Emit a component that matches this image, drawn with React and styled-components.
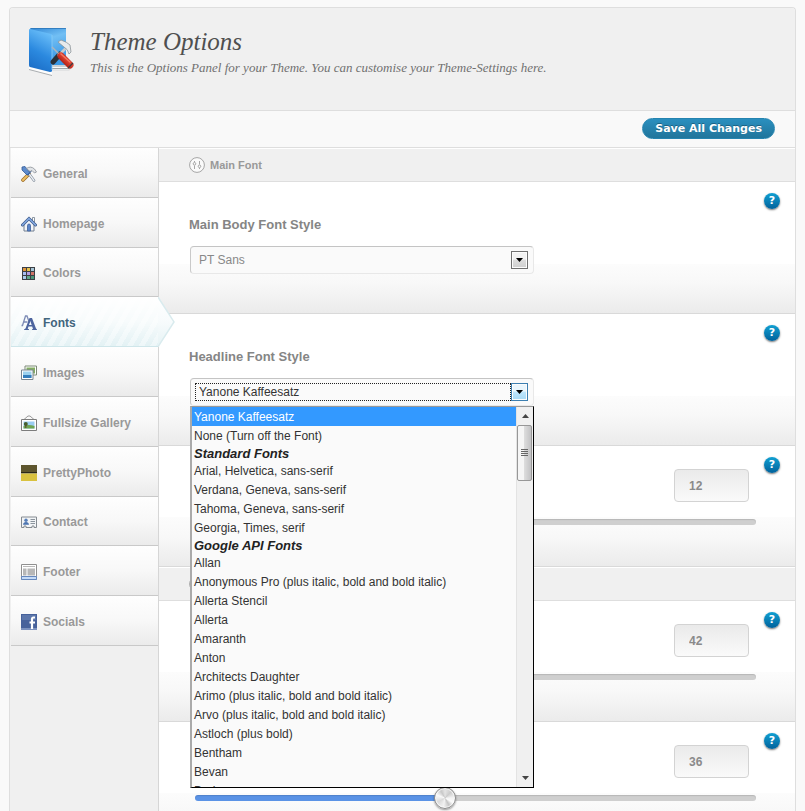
import React, { useState } from "react";
import styled, { createGlobalStyle, css } from "styled-components";

const GlobalStyle = createGlobalStyle`
  *, *::before, *::after { box-sizing: border-box; }
  html { height: 100%; overflow: hidden; }
  body {
    margin: 0;
    background: #f9f9f9;
    color: #8a8a8a;
    font: 12px/16px "Liberation Sans", Arial, sans-serif;
  }
  button, input, select { font: inherit; color: inherit; margin: 0; }
`;

const Page = styled.div`
  height: 100vh;
  overflow: hidden;
  padding: 7px 9px 0;
`;

const Panel = styled.div`
  min-height: 100%;
  display: flex;
  flex-direction: column;
  border: 1px solid #dedede;
  border-bottom: 0;
  border-radius: 4px 4px 0 0;
`;

const Header = styled.header`
  display: flex;
  gap: 14px;
  padding: 18px 18px 32px;
  background: #f0f0f0;
  border-bottom: 1px solid #dedede;
  border-radius: 4px 4px 0 0;
`;

const Title = styled.h1`
  margin: 0;
  color: #4f4f4f;
  font: italic 25px/32px "Liberation Serif", Georgia, serif;
`;

const Subtitle = styled.p`
  margin: 0;
  color: #707070;
  font: italic 13px/20px "Liberation Serif", Georgia, serif;
`;

const Toolbar = styled.div`
  display: flex;
  justify-content: flex-end;
  padding: 7px 20px 8px;
  background: #f9f9f9;
  border-bottom: 1px solid #dedede;
`;

const SaveButton = styled.button`
  height: 21px;
  padding: 0 12px;
  border: 1px solid #2484b0;
  border-radius: 11px;
  background: linear-gradient(#2a8fbf, #21759b);
  color: #fff;
  font: bold 11px/19px "DejaVu Sans", Verdana, sans-serif;
  text-shadow: 0 -1px 0 rgba(0, 0, 0, 0.3);
`;

const Columns = styled.div`
  flex: 1;
  display: grid;
  grid-template-columns: 149px 1fr;
`;

const Sidebar = styled.nav`
  background: #f0f0f0;
  border-right: 1px solid #d6d6d6;
  padding-left: 1px;
`;

const NavList = styled.ul`
  display: grid;
  grid-auto-rows: 1fr;
  min-height: 498px;
  margin: 0;
  padding: 0;
  list-style: none;
`;

const NavItem = styled.li`
  position: relative;
  display: flex;
`;

const NavLink = styled.a`
  flex: 1;
  display: flex;
  align-items: center;
  gap: 6px;
  padding: 3px 0 0 10px;
  border-bottom: 1px solid #c9c9c9;
  background: linear-gradient(#fefefe, #f8f8f8 50%, #ebebeb);
  color: #999;
  font-weight: bold;
  text-decoration: none;
  ${(p) =>
    p.$active &&
    css`
      color: #42657d;
      border-bottom-color: #cfe6ea;
      background:
        linear-gradient(#fff, rgba(255, 255, 255, 0.75) 50%, rgba(255, 255, 255, 0.1)),
        repeating-linear-gradient(120deg, #e0f0f3 0 5px, #ecf6f8 5px 10px);
    `}
`;

const ArrowTip = styled.svg`
  position: absolute;
  z-index: 2;
  top: 0;
  left: 100%;
  width: 17px;
  height: 100%;
`;

const Main = styled.main`
  min-width: 0;
  background: #fff;
`;

const SectionHead = styled.h2`
  display: flex;
  align-items: center;
  gap: 5px;
  height: 34px;
  margin: 0;
  padding: 0 30px;
  border-top: 1px solid #fff;
  border-bottom: 1px solid #dedede;
  background: #f0f0f0;
  color: #999;
  font-size: 11px;
  line-height: 16px;
`;

const Section = styled.section`
  display: grid;
  grid-template-columns: 1fr 16px;
  gap: 8px;
  min-height: ${(p) => (p.$tall ? "132px" : "121px")};
  padding: 11px 15px 0 30px;
  border-bottom: 1px solid #d9d9d9;
  background: linear-gradient(#fcfcfc, #f8f8f8 40%, #ebebeb) bottom / 100% 49px no-repeat #fff;
`;

const Field = styled.div`
  padding-top: 24px;
`;

const FieldLabel = styled.label`
  display: block;
  color: #858585;
  font-size: 13px;
  font-weight: bold;
  line-height: 16px;
`;

const HelpButton = styled.button`
  width: 16px;
  height: 16px;
  padding: 0;
  border: 0;
  border-radius: 50%;
  background: linear-gradient(#11a0d2, #00619b);
  box-shadow: 0 1px 2px rgba(0, 0, 0, 0.55);
  color: #fff;
  font: bold 11px/16px "DejaVu Sans", Verdana, sans-serif;
`;

const SelectBox = styled.div`
  position: relative;
  display: flex;
  align-items: center;
  max-width: 344px;
  height: 28px;
  margin: 13px 0 0 1px;
  padding: 0 5px 0 4px;
  border: 1px solid #e8e8e8;
  border-top-color: #c4c4c4;
  border-left-color: #c9c9c9;
  border-radius: 4px;
  background: #fafafa;
`;

const Select = styled.select`
  appearance: none;
  flex: 1;
  min-width: 0;
  height: 18px;
  padding: 0 3px;
  border: 1px dotted ${(p) => (p.$open ? "#222" : "transparent")};
  border-radius: 0;
  background: transparent;
  color: ${(p) => (p.$open ? "#333" : "#888")};
  line-height: 16px;
  outline: 0;
`;

const SelectArrow = styled.span`
  display: flex;
  align-items: center;
  justify-content: center;
  width: 17px;
  height: 18px;
  border: 1px solid ${(p) => (p.$open ? "#3c7fb1" : "#707070")};
  background: ${(p) =>
    p.$open
      ? "linear-gradient(#eaf6fd 45%, #bee6fd 50%, #a7d9f5)"
      : "linear-gradient(#f2f2f2 45%, #dddddd 50%, #cfcfcf)"};
  box-shadow: inset 0 0 0 1px #fcfcfc;
  pointer-events: none;
`;

const Menu = styled.div`
  position: absolute;
  z-index: 5;
  top: 27px;
  left: -1px;
  right: -1px;
  display: grid;
  grid-template-columns: 1fr 17px;
  height: 382px;
  border: 1px solid #000;
  border-top-color: #999;
  border-left: 2px solid #aaa;
  background: #fafafa;
`;

const Options = styled.ul`
  margin: 0;
  padding: 0;
  overflow: hidden;
  list-style: none;
`;

const Option = styled.li`
  height: 19px;
  padding-left: 2px;
  background: ${(p) => (p.$selected ? "#3399ff" : "transparent")};
  color: ${(p) => (p.$selected ? "#fff" : "#333")};
  line-height: 20px;
  white-space: nowrap;
`;

const OptionGroup = styled.li`
  height: 16px;
  padding-left: 2px;
  color: #222;
  font-size: 13px;
  font-weight: bold;
  font-style: italic;
  line-height: 17px;
`;

const ScrollBar = styled.div`
  display: flex;
  flex-direction: column;
  align-items: stretch;
  border-left: 1px solid #e3e3e3;
  background: #f0f0f0;
`;

const ScrollArrow = styled.span`
  display: flex;
  align-items: center;
  justify-content: center;
  height: 18px;
`;

const ScrollThumb = styled.span`
  display: flex;
  align-items: center;
  justify-content: center;
  height: 56px;
  margin-right: 1px;
  margin-bottom: auto;
  border: 1px solid #979797;
  border-radius: 2px;
  background: linear-gradient(90deg, #f5f5f5 45%, #dcdcdc 50%, #c2c2c4);
`;

const SizeField = styled.div`
  display: flex;
  flex-direction: column;
  padding: 12px 0 0 6px;
`;

const SizeInput = styled.input`
  align-self: flex-end;
  width: 75px;
  height: 33px;
  margin-right: 7px;
  padding: 0 14px;
  border: 1px solid #d3d3d3;
  border-radius: 4px;
  background: linear-gradient(#eaeaea, #fafafa);
  color: #8a8a8a;
  font-weight: bold;
`;

const Slider = styled.input`
  appearance: none;
  width: 100%;
  height: 22px;
  margin-top: 9px;
  background: transparent;

  &::-webkit-slider-runnable-track {
    height: 6px;
    border-radius: 3px;
    box-shadow: inset 0 1px 1px rgba(0, 0, 0, 0.12);
    background: linear-gradient(90deg, #5b93e6 var(--fill), #cfcfcf var(--fill));
  }

  &::-webkit-slider-thumb {
    appearance: none;
    width: 22px;
    height: 22px;
    margin-top: -8px;
    border: 1px solid #8c8c8c;
    border-radius: 50%;
    background: conic-gradient(#e4e4e4, #cccccc 45deg, #f4f4f4 90deg, #fafafa 120deg, #c4c4c4 150deg, #f2f2f2 190deg, #dadada 240deg, #fafafa 290deg, #c8c8c8 330deg, #e4e4e4);
    box-shadow: 0 1px 2px rgba(0, 0, 0, 0.4), inset 0 0 0 1px rgba(255, 255, 255, 0.7);
  }
`;

const LogoIcon = () => (
  <svg width="48" height="50" viewBox="0 0 48 50" aria-hidden="true">
    <defs>
      <linearGradient id="lgBack" x1="0" y1="0" x2="0.3" y2="1">
        <stop offset="0" stopColor="#2f86d6" />
        <stop offset="0.4" stopColor="#72bff4" />
        <stop offset="1" stopColor="#3a97e4" />
      </linearGradient>
      <linearGradient id="lgFront" x1="0.6" y1="0" x2="0.3" y2="1">
        <stop offset="0" stopColor="#6cc0fa" />
        <stop offset="0.55" stopColor="#2b89df" />
        <stop offset="1" stopColor="#1b6dc6" />
      </linearGradient>
      <linearGradient id="lgRed" x1="0" y1="1" x2="1" y2="0">
        <stop offset="0" stopColor="#8f0f0a" />
        <stop offset="0.6" stopColor="#e2402f" />
        <stop offset="1" stopColor="#b51d14" />
      </linearGradient>
    </defs>
    <path d="M6 38h33l3 5q0 1-1 1H20z" fill="#fafafa" stroke="#c5c8ca" strokeWidth="0.6" />
    <path d="M24 40h15M24 42.500h17" stroke="#9fa5a9" strokeWidth="1" />
    <path d="M2 3q0-1 1-1h34q1 0 1 1v36H8z" fill="url(#lgBack)" />
    <path d="M3 2.500h35" stroke="#2c76b8" strokeWidth="0.8" />
    <path d="M1 42l23 6v2L1 44z" fill="#a9adb0" />
    <path d="M1 39l23 6v4L1 43z" fill="#fdfdfd" />
    <path d="M1 4q0-1 1-1l21 5q1 0 1 1v36q0 1-2 1L2 41q-1 0-1-2z" fill="url(#lgFront)" />
    <path d="M24 9v35" stroke="#8bcdf8" strokeWidth="0.8" />
    <path d="M32 28L25 36" stroke="#2b3138" strokeWidth="5" strokeLinecap="round" />
    <path d="M39 21l-9 9" stroke="#c6cbd0" strokeWidth="2.600" />
    <path d="M30 16l3-2q6 2 9 5l1 7-2 2q-1-5-5-7z" fill="#e7eaec" stroke="#8d9499" strokeWidth="0.8" />
    <path d="M24 21l9 9" stroke="#aeb4ba" strokeWidth="1.400" />
    <path d="M33 30l9 9" stroke="url(#lgRed)" strokeWidth="7" strokeLinecap="round" />
    <path d="M33 28l9 8" stroke="#f07a63" strokeWidth="1.400" strokeLinecap="round" />
    <path d="M40 42l5-5" stroke="#3a3e42" strokeWidth="1.200" />
  </svg>
);

const iconArt = {
  general: (
    <>
      <path d="M2 14L8 8" stroke="#9b6a25" strokeWidth="3.6" strokeLinecap="round" />
      <path d="M2 14L8 8" stroke="#ebbe62" strokeWidth="2.2" strokeLinecap="round" />
      <path d="M13 14.500L6 5" stroke="#7d8896" strokeWidth="2.600" strokeLinecap="round" />
      <path d="M13 14.500L6 5" stroke="#edf1f5" strokeWidth="1.300" strokeLinecap="round" />
      <path d="M10 4L6 9" stroke="#345a98" strokeWidth="2.600" />
      <path d="M1 1l3-.5 5 6-3 2.500L1 4z" fill="#5d8bcb" stroke="#345a98" strokeWidth=".8" />
      <path d="M5.500 2.500q4-3 8 .5l2 3-2 1-2.500-2.500-2 1z" fill="#e2e5e8" stroke="#8b9197" strokeWidth=".8" />
    </>
  ),
  homepage: (
    <>
      <path d="M11.500 1.500h2V6h-2z" fill="#fff" stroke="#6f7c8c" strokeWidth=".8" />
      <path d="M3 8l5-5 5 5v7H3z" fill="#f3f5f9" stroke="#707e90" strokeWidth="1" />
      <path d="M6.500 15V9.500Q6.500 8 8 8t1.500 1.500V15z" fill="#5c85c9" stroke="#3c5f9c" strokeWidth=".8" />
      <path d="M1.500 9L8 2.500 14.500 9" fill="none" stroke="#405d8d" strokeWidth="3" strokeLinecap="round" />
      <path d="M1.500 9L8 2.500 14.500 9" fill="none" stroke="#86abe4" strokeWidth="1.500" strokeLinecap="round" />
    </>
  ),
  colors: (
    <>
      <path d="M1 2h13v13H1z" fill="#3b3f45" />
      <path d="M2 3h3v3H2z" fill="#e0953b" />
      <path d="M6 3h3v3H6z" fill="#e3c34e" />
      <path d="M10 3h3v3h-3z" fill="#a6c4d4" />
      <path d="M2 7h3v3H2z" fill="#a8bdf3" />
      <path d="M6 7h3v3H6z" fill="#b39de4" />
      <path d="M10 7h3v3h-3z" fill="#d07467" />
      <path d="M2 11h3v3H2z" fill="#aacbec" />
      <path d="M6 11h3v3H6z" fill="#5fa98a" />
      <path d="M10 11h3v3h-3z" fill="#4b9477" />
    </>
  ),
  fonts: (
    <>
      <path d="M.5 10.500h1L4.500 1h1.500l2.500 7M2.500 7h4" fill="none" stroke="#7d8bb5" strokeWidth="1.300" />
      <path fillRule="evenodd" d="M3 14.500L4.500 13.500 8.500 3h2.500l4 10.500 1 1v.5h-5v-.7l1-.4-.8-2.400H7.500l-.8 2.200 1.300.6v.7H3zM8 10h2.700L9.300 6z" fill="#4d659f" />
    </>
  ),
  images: (
    <>
      <path d="M4 1h11.500v9H4z" fill="#fff" stroke="#7d8a77" />
      <path d="M5.500 2.500H14v6H5.500z" fill="#83ac63" />
      <path d="M.5 5h11.500v9.500H.5z" fill="#fff" stroke="#788591" />
      <path d="M2 6.500h8.500V13H2z" fill="#9bd0ee" />
      <path d="M2 10h8.500v3H2z" fill="#347dbc" />
    </>
  ),
  gallery: (
    <>
      <path d="M3 4.500L7 1h2l4 3.500" fill="none" stroke="#9a9a9a" />
      <path d="M.5 4.500h15v11H.5z" fill="#fff" stroke="#7d7d7d" />
      <path d="M2.500 6.500h11v7h-11z" fill="#9acdf2" />
      <path d="M2.500 11q5-2 11 0v2.500h-11z" fill="#6fa452" />
      <circle cx="4.800" cy="9" r="2" fill="#48602e" />
      <path d="M4.300 10h1v3h-1z" fill="#5b472a" />
    </>
  ),
  photo: (
    <>
      <path d="M0 0h16v8H0z" fill="#5d552d" />
      <path d="M0 7h16v1.500H0z" fill="#2b281a" />
      <path d="M0 8.500h16V16H0z" fill="#d9c23f" />
    </>
  ),
  contact: (
    <>
      <path d="M.5 3h15v10.500h-2.500V12h-2v1.500H5V12H3v1.500H.5z" fill="#f2f4f6" stroke="#858b91" />
      <circle cx="5" cy="6.200" r="1.700" fill="#587fb8" />
      <path d="M2 10.800q.4-2.800 3-2.800t3 2.800z" fill="#4d75b1" />
      <path d="M9.500 5.500H14M9.500 7.500H14M9.500 9.500H14" stroke="#8b949d" />
    </>
  ),
  footer: (
    <>
      <path d="M.5.500h15v15H.5z" fill="#fff" stroke="#909090" />
      <path d="M2 2.500h12" stroke="#b9b9b9" />
      <path d="M2 4.500h3.500v7H2zM6.500 4.500H14v7H6.500z" fill="#b7b7b7" />
      <path d="M.5 12.500h15v3H.5z" fill="#c5dbf7" stroke="#6688bd" />
    </>
  ),
  socials: (
    <>
      <path d="M0 0h16v16H0z" fill="#47629b" />
      <path d="M1 1h14v5H1z" fill="#5d77ab" />
      <path d="M0 14h16v2H0z" fill="#7c92bf" />
      <path d="M14 3.500h-1.500Q11 3.500 11 5.500V15M8.500 8.500H14" fill="none" stroke="#fff" strokeWidth="2.200" />
    </>
  ),
};

const NavIcon = ({ name }) => (
  <svg width="16" height="16" viewBox="0 0 16 16" aria-hidden="true">
    {iconArt[name]}
  </svg>
);

const SettingsIcon = () => (
  <svg width="16" height="16" viewBox="0 0 16 16" fill="none" stroke="#a5a5a5" aria-hidden="true">
    <circle cx="8" cy="8" r="7.400" fill="#fafafa" />
    <path d="M5.500 4v1M5.500 8.500V12M10.500 4v3.500M10.500 11v1" />
    <circle cx="5.500" cy="6.800" r="1.300" />
    <circle cx="10.500" cy="9.300" r="1.300" />
  </svg>
);

const Triangle = ({ up }) => (
  <svg width="7" height="4" viewBox="0 0 7 4" aria-hidden="true">
    <path d={up ? "M0 4L3.500 0 7 4z" : "M0 0h7L3.500 4z"} fill={up === undefined ? "#000" : "#444"} />
  </svg>
);

const Grip = () => (
  <svg width="7" height="8" viewBox="0 0 7 8" stroke="#666" aria-hidden="true">
    <path d="M0 .5h7M0 2.500h7M0 4.500h7M0 6.500h7" />
  </svg>
);

const navItems = [
  ["general", "General"],
  ["homepage", "Homepage"],
  ["colors", "Colors"],
  ["fonts", "Fonts"],
  ["images", "Images"],
  ["gallery", "Fullsize Gallery"],
  ["photo", "PrettyPhoto"],
  ["contact", "Contact"],
  ["footer", "Footer"],
  ["socials", "Socials"],
];

const fontOptions = [
  { name: "Yanone Kaffeesatz" },
  { name: "None (Turn off the Font)" },
  { group: "Standard Fonts" },
  { name: "Arial, Helvetica, sans-serif" },
  { name: "Verdana, Geneva, sans-serif" },
  { name: "Tahoma, Geneva, sans-serif" },
  { name: "Georgia, Times, serif" },
  { group: "Google API Fonts" },
  { name: "Allan" },
  { name: "Anonymous Pro (plus italic, bold and bold italic)" },
  { name: "Allerta Stencil" },
  { name: "Allerta" },
  { name: "Amaranth" },
  { name: "Anton" },
  { name: "Architects Daughter" },
  { name: "Arimo (plus italic, bold and bold italic)" },
  { name: "Arvo (plus italic, bold and bold italic)" },
  { name: "Astloch (plus bold)" },
  { name: "Bentham" },
  { name: "Bevan" },
  { name: "Buda" },
];

function FontSelect({ id, label, initial, open }) {
  const [value, setValue] = useState(initial);
  return (
    <Section $tall>
      <Field>
        <FieldLabel htmlFor={id}>{label}</FieldLabel>
        <SelectBox>
          <Select id={id} $open={open} value={value} onChange={(e) => setValue(e.target.value)}>
            <option>{value}</option>
          </Select>
          <SelectArrow $open={open}>
            <Triangle />
          </SelectArrow>
          {open && (
            <Menu>
              <Options role="listbox" aria-label={label}>
                {fontOptions.map((o) =>
                  o.group ? (
                    <OptionGroup key={o.group} role="presentation">{o.group}</OptionGroup>
                  ) : (
                    <Option
                      key={o.name}
                      role="option"
                      aria-selected={o.name === value}
                      $selected={o.name === value}
                      onClick={() => setValue(o.name)}
                    >
                      {o.name}
                    </Option>
                  )
                )}
              </Options>
              <ScrollBar aria-hidden="true">
                <ScrollArrow><Triangle up={true} /></ScrollArrow>
                <ScrollThumb><Grip /></ScrollThumb>
                <ScrollArrow><Triangle up={false} /></ScrollArrow>
              </ScrollBar>
            </Menu>
          )}
        </SelectBox>
      </Field>
      <HelpButton type="button" aria-label={`Help: ${label}`}>?</HelpButton>
    </Section>
  );
}

const MIN_SIZE = 9;
const MAX_SIZE = 70;

function SizeSetting({ label, initial }) {
  const [size, setSize] = useState(initial);
  const fill = ((size - MIN_SIZE) / (MAX_SIZE - MIN_SIZE)) * 100;
  return (
    <Section>
      <SizeField>
        <SizeInput aria-label={label} value={size} onChange={(e) => setSize(e.target.value)} />
        <Slider
          type="range"
          aria-label={`${label} slider`}
          min={MIN_SIZE}
          max={MAX_SIZE}
          value={size}
          onChange={(e) => setSize(e.target.value)}
          style={{ "--fill": `${fill}%` }}
        />
      </SizeField>
      <HelpButton type="button" aria-label={`Help: ${label}`}>?</HelpButton>
    </Section>
  );
}

export default function App() {
  return (
    <Page>
      <GlobalStyle />
      <Panel>
        <Header>
          <LogoIcon />
          <div>
            <Title>Theme Options</Title>
            <Subtitle>
              This is the Options Panel for your Theme. You can customise your Theme-Settings here.
            </Subtitle>
          </div>
        </Header>
        <Toolbar>
          <SaveButton type="button">Save All Changes</SaveButton>
        </Toolbar>
        <Columns>
          <Sidebar aria-label="Option groups">
            <NavList>
              {navItems.map(([icon, label]) => {
                const active = icon === "fonts";
                return (
                  <NavItem key={icon}>
                    <NavLink href={`#${icon}`} $active={active} aria-current={active ? "page" : undefined}>
                      <NavIcon name={icon} />
                      {label}
                    </NavLink>
                    {active && (
                      <ArrowTip viewBox="0 0 17 50" preserveAspectRatio="none" aria-hidden="true">
                        <defs>
                          <linearGradient id="tip" x1="0" y1="0" x2="0" y2="1">
                            <stop offset="0" stopColor="#fff" />
                            <stop offset="0.5" stopColor="#f7fbfc" />
                            <stop offset="1" stopColor="#e6f3f5" />
                          </linearGradient>
                        </defs>
                        <path d="M0 0L16 25 0 50z" fill="url(#tip)" />
                        <path d="M0 0L16 25 0 50" fill="none" stroke="#d9ebee" strokeWidth="1.500" />
                      </ArrowTip>
                    )}
                  </NavItem>
                );
              })}
            </NavList>
          </Sidebar>
          <Main>
            <SectionHead>
              <SettingsIcon />
              Main Font
            </SectionHead>
            <FontSelect id="body-font" label="Main Body Font Style" initial="PT Sans" />
            <FontSelect id="headline-font" label="Headline Font Style" initial="Yanone Kaffeesatz" open />
            <SizeSetting label="Body font size" initial={12} />
            <SectionHead aria-label="Headline sizes">
              <SettingsIcon />
            </SectionHead>
            <SizeSetting label="H1 font size" initial={42} />
            <SizeSetting label="H2 font size" initial={36} />
          </Main>
        </Columns>
      </Panel>
    </Page>
  );
}
